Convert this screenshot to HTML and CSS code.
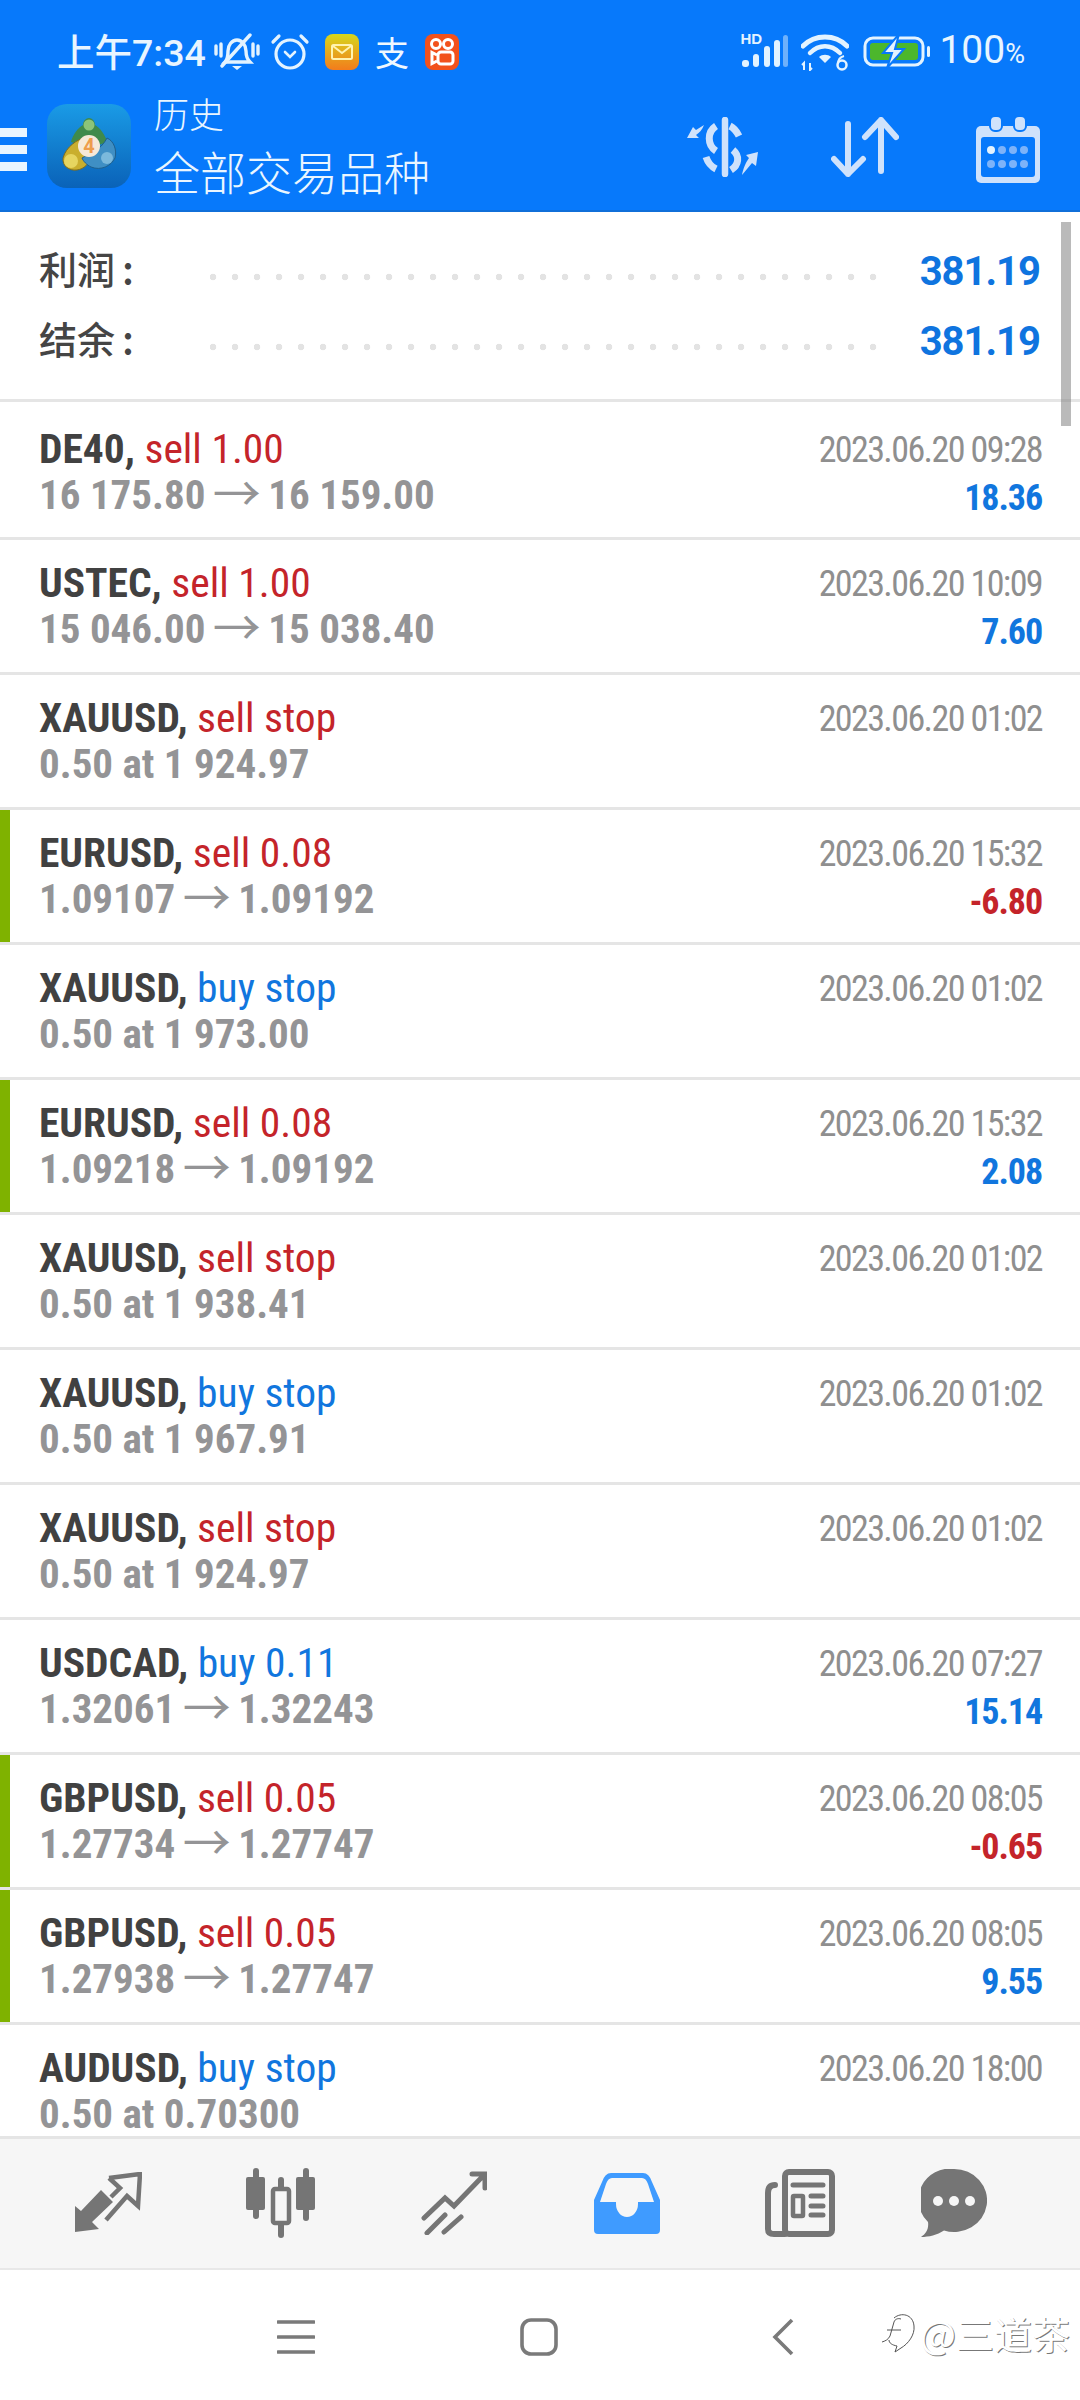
FILE: index.html
```html
<!DOCTYPE html>
<html lang="zh-CN">
<head>
<meta charset="utf-8">
<title>历史</title>
<link rel="stylesheet" href="styles.css">
</head>
<body>
<div class="screen">
  <header class="header">
    <div class="status">
      <div class="status-group">
        <span class="clock">上午7:34</span>
        <svg class="ic-bell" width="46" height="38" viewBox="0 0 46 38"><g fill="none" stroke="#e3f3ff" stroke-width="3.4" stroke-linecap="round"><path d="M11 29c3-3 3-6 3-11 0-6 4-11 9-11s9 5 9 11c0 5 1 8 4 11z"/><path d="M8 33L36 2"/><path d="M2 13v8M7 11v12M39 11v12M44 13v8"/></g><path d="M18 33h10l-5 4z" fill="#e3f3ff"/></svg>
        <svg class="ic-alarm" width="40" height="38" viewBox="0 0 40 38"><g fill="none" stroke="#e3f3ff" stroke-width="3.2" stroke-linecap="round"><circle cx="20" cy="21" r="14"/><path d="M3 9l6-6M37 9l-6-6"/><path d="M15 19l5 5 5-5" stroke-width="2.6"/></g></svg>
        <svg class="ic-mail" width="34" height="36" viewBox="0 0 34 36"><defs><linearGradient id="mailGrad" x1="0" y1="0" x2="0" y2="1"><stop offset="0" stop-color="#d7d71c"/><stop offset="1" stop-color="#f37c1c"/></linearGradient></defs><rect width="34" height="36" rx="8" fill="url(#mailGrad)"/><rect x="7" y="11" width="20" height="14" rx="1.5" fill="none" stroke="#fff3b0" stroke-width="2"/><path d="M8 12l9 7 9-7" fill="none" stroke="#fff3b0" stroke-width="2"/></svg>
        <span class="alipay">支</span>
        <svg class="ic-kwai" width="34" height="36" viewBox="0 0 34 36"><rect width="34" height="36" rx="8" fill="#f2511b"/><g fill="none" stroke="#fff" stroke-width="3"><circle cx="11" cy="10" r="4.5"/><circle cx="23" cy="10" r="4.5"/><rect x="13" y="18" width="15" height="12" rx="3"/><path d="M12 21l-5-2.500v11l5-2.500"/></g></svg>
      </div>
      <div class="status-group status-right">
        <span class="signal"><b class="hd">HD</b><svg width="48" height="36" viewBox="0 0 48 36"><g fill="#e3f3ff"><rect x="2" y="26" width="7" height="7" rx="3"/><rect x="13" y="20" width="6" height="13" rx="3"/><rect x="24" y="12" width="6" height="21" rx="3"/><rect x="34" y="6" width="6" height="27" rx="3"/></g><rect x="43" y="1" width="5" height="32" rx="2.500" fill="#6eb1fb"/></svg></span>
        <svg class="ic-wifi" width="48" height="38" viewBox="0 0 48 38"><g fill="none" stroke="#e3f3ff" stroke-linecap="round"><path d="M2 13C14 1 34 1 46 13" stroke-width="5"/><path d="M9 20C18 11 30 11 39 20" stroke-width="4.500"/></g><path d="M18 24c3-3 9-3 12 0l-6 6z" fill="#e3f3ff"/><path d="M3 37v-7l-2 2M9 30v7l2-2" fill="none" stroke="#e3f3ff" stroke-width="2"/><circle cx="41" cy="32" r="4.500" fill="none" stroke="#e3f3ff" stroke-width="2.500"/><path d="M37 31c0-5 2-7 6-8" fill="none" stroke="#e3f3ff" stroke-width="2"/></svg>
        <svg class="ic-batt" width="70" height="34" viewBox="0 0 70 34"><rect x="2" y="3" width="58" height="27" rx="8" fill="none" stroke="#e3f3ff" stroke-width="3"/><rect x="7" y="8" width="48" height="17" rx="3" fill="#4cb72c"/><path d="M36-1L20 18h9l-5 15 17-19h-9z" fill="#e3f3ff" stroke="#0779fb" stroke-width="2"/><rect x="64" y="11" width="3" height="11" rx="1.500" fill="#e3f3ff"/></svg>
        <span class="battery">100<small>%</small></span>
      </div>
    </div>
    <div class="appbar">
      <div class="burger"><i></i><i></i><i></i></div>
      <div class="logo">
        <svg width="84" height="84" viewBox="0 0 84 84"><defs><linearGradient id="logoBg" x1="0" y1="0" x2="0" y2="1"><stop offset="0" stop-color="#1a9be6"/><stop offset="1" stop-color="#0a62b8"/></linearGradient></defs><rect width="84" height="84" rx="20" fill="url(#logoBg)"/><path d="M24 38c2-8 7-14 12-17 0-4 3-7 6-7s6 3 6 7c5 3 10 9 12 17l-8 3H33z" fill="#3f8a4c"/><circle cx="42" cy="21" r="5.500" fill="#8cc478"/><path d="M40 33c-10 2-21 10-24 21-1 8 6 13 14 12 7-1 12-6 15-14z" fill="#c9ae2e" stroke="#7c6c20" stroke-width="1"/><circle cx="24" cy="57" r="7" fill="#e6d560"/><path d="M46 48c6-3 11-8 14-14 7 3 10 12 8 20-4 8-14 13-24 9-4-2-8-6-9-9z" fill="#3f8fc4" stroke="#1f5f8c" stroke-width="1"/><circle cx="60" cy="54" r="6" fill="#7bb9dc"/><circle cx="42" cy="42" r="11" fill="#f6e9d8"/><text class="logo-num" x="42" y="49" text-anchor="middle">4</text></svg>
      </div>
      <div class="titles">
        <div class="title-sm">历史</div>
        <div class="title-lg">全部交易品种</div>
      </div>
      <div class="actions">
        <svg class="act-money" width="75" height="60" viewBox="0 0 75 60"><g fill="none" stroke="#cfe2fb" stroke-linecap="round"><path d="M40 3v54" stroke-width="6.500"/><path d="M31 9c-9 6-9 19 0 25M45 9c4 2 7 6 9 10M48 33c7 6 6 15-2 20M21 40c2 6 6 10 10 12" stroke-width="7" stroke-linecap="butt"/></g><path d="M2 21l6-11 3 3 8-5c-2 5-5 8-8 10l3 3zM73 35l-2 14-4-3-10 12c1-6 4-13 7-17l-3-3z" fill="#cfe2fb"/></svg>
        <svg class="act-sort" width="68" height="60" viewBox="0 0 68 60"><g fill="none" stroke="#cfe2fb" stroke-width="6" stroke-linecap="round" stroke-linejoin="round"><path d="M17 7v50M3 42l14 15 15-15"/><path d="M50 54V3M34 20L50 3l15 17"/></g></svg>
        <svg class="act-cal" width="66" height="68" viewBox="0 0 66 68"><rect y="11" width="64" height="57" rx="5" fill="#cfe2fb"/><rect x="5" y="22" width="54" height="40" rx="3" fill="#0779fb"/><rect x="14" y="1" width="12" height="15" rx="5" fill="#cfe2fb" stroke="#0779fb" stroke-width="2"/><rect x="38" y="1" width="12" height="15" rx="5" fill="#cfe2fb" stroke="#0779fb" stroke-width="2"/><g fill="#7db3f9"><circle cx="26" cy="35" r="4"/><circle cx="37" cy="35" r="4"/><circle cx="48" cy="35" r="4"/><circle cx="15" cy="49" r="4"/><circle cx="26" cy="49" r="4"/><circle cx="37" cy="49" r="4"/><circle cx="48" cy="49" r="4"/></g><circle cx="15" cy="35" r="4" fill="#e3f3ff"/></svg>
      </div>
    </div>
  </header>

  <main class="list">
    <div class="scrollbar"></div>
    <section class="summary">
      <div class="sum-row"><span class="sum-label">利润<span class="colon">:</span></span><span class="leader"></span><span class="sum-value">381.19</span></div>
      <div class="sum-row"><span class="sum-label">结余<span class="colon">:</span></span><span class="leader"></span><span class="sum-value">381.19</span></div>
    </section>

    <div class="row first">
      <div class="col"><div class="l1"><b>DE40,</b> <span class="sell">sell 1.00</span></div><div class="l2">16 175.80 <span class="arrow">→</span> 16 159.00</div></div>
      <div class="col right"><div class="date">2023.06.20 09:28</div><div class="pos">18.36</div></div>
    </div>
    <div class="row">
      <div class="col"><div class="l1"><b>USTEC,</b> <span class="sell">sell 1.00</span></div><div class="l2">15 046.00 <span class="arrow">→</span> 15 038.40</div></div>
      <div class="col right"><div class="date">2023.06.20 10:09</div><div class="pos">7.60</div></div>
    </div>
    <div class="row">
      <div class="col"><div class="l1"><b>XAUUSD,</b> <span class="sell">sell stop</span></div><div class="l2">0.50 at 1 924.97</div></div>
      <div class="col right"><div class="date">2023.06.20 01:02</div></div>
    </div>
    <div class="row marked">
      <div class="col"><div class="l1"><b>EURUSD,</b> <span class="sell">sell 0.08</span></div><div class="l2">1.09107 <span class="arrow">→</span> 1.09192</div></div>
      <div class="col right"><div class="date">2023.06.20 15:32</div><div class="neg">-6.80</div></div>
    </div>
    <div class="row">
      <div class="col"><div class="l1"><b>XAUUSD,</b> <span class="buy">buy stop</span></div><div class="l2">0.50 at 1 973.00</div></div>
      <div class="col right"><div class="date">2023.06.20 01:02</div></div>
    </div>
    <div class="row marked">
      <div class="col"><div class="l1"><b>EURUSD,</b> <span class="sell">sell 0.08</span></div><div class="l2">1.09218 <span class="arrow">→</span> 1.09192</div></div>
      <div class="col right"><div class="date">2023.06.20 15:32</div><div class="pos">2.08</div></div>
    </div>
    <div class="row">
      <div class="col"><div class="l1"><b>XAUUSD,</b> <span class="sell">sell stop</span></div><div class="l2">0.50 at 1 938.41</div></div>
      <div class="col right"><div class="date">2023.06.20 01:02</div></div>
    </div>
    <div class="row">
      <div class="col"><div class="l1"><b>XAUUSD,</b> <span class="buy">buy stop</span></div><div class="l2">0.50 at 1 967.91</div></div>
      <div class="col right"><div class="date">2023.06.20 01:02</div></div>
    </div>
    <div class="row">
      <div class="col"><div class="l1"><b>XAUUSD,</b> <span class="sell">sell stop</span></div><div class="l2">0.50 at 1 924.97</div></div>
      <div class="col right"><div class="date">2023.06.20 01:02</div></div>
    </div>
    <div class="row">
      <div class="col"><div class="l1"><b>USDCAD,</b> <span class="buy">buy 0.11</span></div><div class="l2">1.32061 <span class="arrow">→</span> 1.32243</div></div>
      <div class="col right"><div class="date">2023.06.20 07:27</div><div class="pos">15.14</div></div>
    </div>
    <div class="row marked">
      <div class="col"><div class="l1"><b>GBPUSD,</b> <span class="sell">sell 0.05</span></div><div class="l2">1.27734 <span class="arrow">→</span> 1.27747</div></div>
      <div class="col right"><div class="date">2023.06.20 08:05</div><div class="neg">-0.65</div></div>
    </div>
    <div class="row marked">
      <div class="col"><div class="l1"><b>GBPUSD,</b> <span class="sell">sell 0.05</span></div><div class="l2">1.27938 <span class="arrow">→</span> 1.27747</div></div>
      <div class="col right"><div class="date">2023.06.20 08:05</div><div class="pos">9.55</div></div>
    </div>
    <div class="row">
      <div class="col"><div class="l1"><b>AUDUSD,</b> <span class="buy">buy stop</span></div><div class="l2">0.50 at 0.70300</div></div>
      <div class="col right"><div class="date">2023.06.20 18:00</div></div>
    </div>
  </main>

  <nav class="tabs">
    <div class="tab"><svg width="68" height="62" viewBox="0 0 68 62"><path d="M1 60V34l6 5 20-21 12 12-21 20 7 7z" fill="#757575"/><path d="M35 6L66 2l-2 32-11-10-21 24M35 6l11 10-9 9" fill="none" stroke="#757575" stroke-width="4.500"/></svg></div>
    <div class="tab"><svg width="70" height="70" viewBox="0 0 70 70"><g fill="#757575"><rect x="0" y="9" width="19" height="33" rx="2"/><rect x="50" y="9" width="19" height="33" rx="2"/><rect x="7" y="0" width="6" height="51" rx="3"/><rect x="57" y="0" width="6" height="53" rx="3"/><rect x="32" y="9" width="6" height="61" rx="3"/></g><rect x="27" y="21" width="16" height="34" rx="2" fill="#f6f6f6" stroke="#757575" stroke-width="4.500"/></svg></div>
    <div class="tab"><svg width="66" height="64" viewBox="0 0 66 64"><g fill="none" stroke="#757575" stroke-width="5" stroke-linecap="round"><path d="M3 47l21-20 9 8L63 4M51 3h13v14"/><path d="M6 62l18-18M23 61l17-15"/></g></svg></div>
    <div class="tab"><svg width="66" height="62" viewBox="0 0 66 62"><path fill-rule="evenodd" d="M17 1h32q6 0 9 9l8 18v30q0 4-4 4H4q-4 0-4-4V28l8-18q3-9 9-9zM18 6q-4 0-6 6L6 30h16v2a11 13 0 0 0 22 0v-2h16l-6-18q-2-6-6-6z" fill="#3f9bff"/></svg></div>
    <div class="tab"><svg width="70" height="68" viewBox="0 0 70 68"><g fill="none" stroke="#757575" stroke-linecap="round"><rect x="20" y="3" width="47" height="62" rx="4" stroke-width="6"/><path d="M10 16Q3 16 3 24v36q0 5 6 5h11" stroke-width="6"/><path d="M28 16h30M46 27h12M46 37h12M46 46h12" stroke-width="5"/><rect x="28" y="27" width="10" height="20" rx="1" stroke-width="4.500"/></g></svg></div>
    <div class="tab"><svg width="66" height="68" viewBox="0 0 66 68"><path d="M33 0a33 31.500 0 1 1-10 61.500C16 66 8 68 0 68c5-3 8-8 7-15A31 31 0 0 1 33 0z" fill="#757575"/><g fill="#f6f6f6"><circle cx="17" cy="32" r="5"/><circle cx="33" cy="32" r="5"/><circle cx="49" cy="32" r="5"/></g></svg></div>
  </nav>

  <footer class="navbar">
    <svg class="nav-menu" width="38" height="34" viewBox="0 0 38 34"><path d="M1 2h36M1 17h36M1 32h36" fill="none" stroke="#7a7a7a" stroke-width="3.400" stroke-linecap="round"/></svg>
    <svg class="nav-home" width="38" height="38" viewBox="0 0 38 38"><rect x="2" y="2" width="34" height="34" rx="9" fill="none" stroke="#7a7a7a" stroke-width="3.600"/></svg>
    <svg class="nav-back" width="22" height="38" viewBox="0 0 22 38"><path d="M20 2L3 19l17 17" fill="none" stroke="#7a7a7a" stroke-width="3.600"/></svg>
    <div class="watermark"><svg width="36" height="42" viewBox="0 0 36 42"><path d="M14 6c7-6 19-4 20 8 1 9-6 18-13 22l-6 4 2-6c-5-1-8-3-8-6M2 30c3-1 6-2 8-6l4-14c1-3 4-4 7-3M7 18h14" fill="#fff" stroke="#555" stroke-width="1"/></svg><span>@三道茶</span></div>
  </footer>
</div>
</body>
</html>
```
FILE: styles.css
```css
* { box-sizing: border-box; }
html, body { margin: 0; padding: 0; }
body { background: #fff; font-family: Roboto, "Noto Sans CJK SC", sans-serif; }

.screen { width: 1080px; height: 2400px; display: flex; flex-direction: column; overflow: hidden; }

/* header */
.header { background: #0779fb; height: 212px; border-bottom: 2px solid #106fd9; flex: none; color: #e8f5ff; }
.status { height: 88px; padding: 16px 55px 0 57px; display: flex; justify-content: space-between; align-items: center; }
.status-group { display: flex; align-items: center; }
.clock { font: 500 37.500px/42px Roboto, "Noto Sans CJK SC", sans-serif; color: #e8f5ff; width: 157px; white-space: nowrap; padding-top: 2px; }
.ic-alarm { margin-left: 10px; }
.ic-mail { margin-left: 15px; }
.alipay { margin-left: 16px; width: 38px; font: 400 34px/36px "Noto Sans CJK SC", sans-serif; color: #f0f8ff; }
.ic-kwai { margin-left: 12px; }
.signal { position: relative; display: block; width: 48px; height: 36px; }
.signal svg { display: block; }
.hd { position: absolute; left: 0; top: -3px; font: 700 15px/16px "Liberation Sans", sans-serif; color: #e3f3ff; }
.ic-wifi { margin-left: 13px; }
.ic-batt { margin-left: 14px; }
.battery { margin-left: 6px; font: 400 39px/42px Roboto, sans-serif; color: #e8f5ff; white-space: nowrap; }
.battery small { font-size: 27px; }

.appbar { height: 122px; display: flex; align-items: flex-start; position: relative; }
.burger { width: 27px; margin-top: 40px; display: flex; flex-direction: column; gap: 8px; flex: none; }
.burger i { display: block; height: 9px; background: #e8f5ff; }
.logo { margin: 16px 0 0 20px; width: 84px; height: 84px; flex: none; }
.logo-num { font: 700 20px Roboto, sans-serif; fill: #ee9d4c; }
.titles { margin: 5px 0 0 23px; flex: none; }
.title-sm { font: 300 35px/40px "Noto Sans CJK SC", sans-serif; color: #eaf6ff; }
.title-lg { margin-top: 9px; font: 300 46px/56px "Noto Sans CJK SC", sans-serif; color: #eaf6ff; white-space: nowrap; }
.actions { margin-left: auto; padding: 27px 38px 0 0; display: flex; align-items: flex-start; gap: 71px; }
.act-money { margin-top: 2px; }
.act-sort { margin-top: 2px; margin-right: 6px; }

/* list */
.list { flex: 1; min-height: 0; overflow: hidden; position: relative; background: #fff; }
.scrollbar { position: absolute; right: 9px; top: 10px; width: 10px; height: 204px; background: rgba(130,130,130,.55); z-index: 2; }
.summary { height: 190px; padding: 26px 39px 0; border-bottom: 3px solid #e5e5e5; display: flex; flex-direction: column; }
.sum-row { height: 70px; display: flex; align-items: center; }
.sum-label { width: 171px; flex: none; margin-top: -12px; font: 500 38px/52px "Noto Sans CJK SC", sans-serif; color: #454545; }
.colon { margin-left: 7px; font-size: 40px; }
.leader { flex: 1; height: 8px; margin: 8px 38px 0 0; background-image: radial-gradient(circle at 3px 4px, #e3e3e3 3px, transparent 3.600px); background-size: 22px 8px; background-repeat: repeat-x; }
.sum-value { margin-top: -3px; margin-right: 1px; font: 700 40px/48px Roboto, sans-serif; letter-spacing: -1px; color: #0f74df; }

.row { height: 135px; padding: 19px 38px 0 39px; border-bottom: 3px solid #e5e5e5; display: flex; justify-content: space-between; font-family: Roboto, sans-serif; font-stretch: 75%; white-space: nowrap; }
.row.first { height: 138px; padding-top: 23px; }
.row.marked { box-shadow: inset 10px 0 0 #7fb200; }
.col { display: flex; flex-direction: column; }
.right { align-items: flex-end; padding-top: 2px; }
.l1, .l2, .date, .pos, .neg { line-height: 47px; }
.l1 { font-size: 41.500px; font-weight: 400; }
.l1 b { font-weight: 700; color: #414141; }
.sell { color: #c4242a; }
.buy { color: #1176de; }
.l2 { font-size: 41px; font-weight: 700; color: #949496; }
.arrow { margin: 0 -2px; font-family: "Noto Sans CJK SC", sans-serif; font-size: 48px; font-stretch: normal; font-weight: 400; line-height: 0; vertical-align: -2px; }
.date { font-size: 36px; font-weight: 400; letter-spacing: -1.600px; color: #8f8f8f; }
.pos, .neg { margin-top: 1px; font-size: 36px; font-weight: 700; letter-spacing: -1.100px; }
.pos { color: #1176de; }
.neg { color: #c4242a; }

/* tabs */
.tabs { height: 134px; flex: none; background: #f6f6f6; border-top: 3px solid #e5e5e5; border-bottom: 2px solid #e8e8e8; padding: 0 0 2px 21px; display: grid; grid-template-columns: repeat(5, 173px) 136px; align-items: center; justify-items: center; }
.tab { display: flex; }

/* nav */
.navbar { height: 130px; flex: none; position: relative; display: flex; align-items: center; padding: 4px 0 0 277px; background: #fff; }
.nav-home { margin-left: 205px; }
.nav-back { margin-left: 214px; }
.watermark { position: absolute; left: 880px; top: 40px; display: flex; align-items: center; gap: 4px; font: 400 38px/46px "Noto Sans CJK SC", sans-serif; color: #fff; text-shadow: 1px 1px 0 #777; white-space: nowrap; }
```
